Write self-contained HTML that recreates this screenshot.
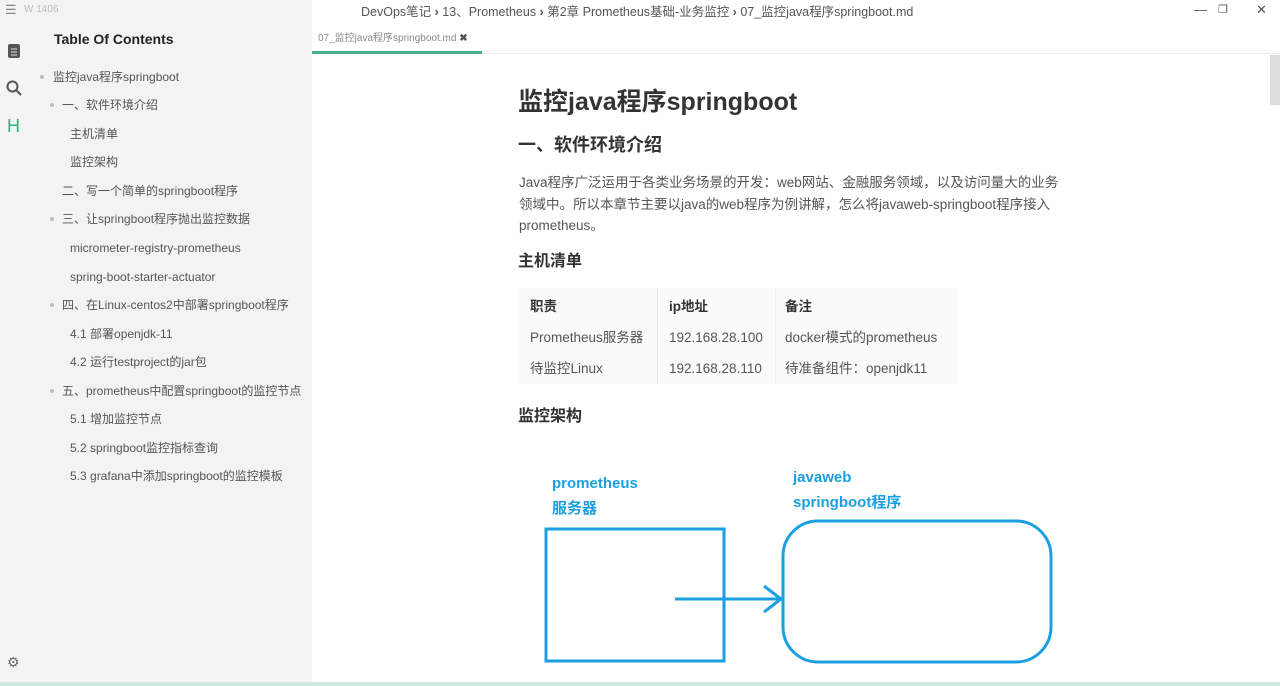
<!DOCTYPE html>
<html><head><meta charset="utf-8"><style>
*{margin:0;padding:0;box-sizing:border-box}
body{width:1280px;height:686px;overflow:hidden;background:#fff;font-family:"Liberation Sans","Noto Sans CJK SC",sans-serif;position:relative;color:#333}
.side{position:absolute;left:0;top:0;width:312px;height:686px;background:#f3f3f3}
.t{position:absolute;white-space:nowrap;font-size:12px;color:#555;line-height:16px}
.b{position:absolute;width:4px;height:4px;border-radius:2px;background:#bbb}
.c{position:absolute;white-space:nowrap;line-height:1.2}
.bot{position:absolute;left:0;top:682px;width:1280px;height:4px;background:#cfe8df}
</style></head><body>
<div class="side">
<div class="t" style="left:5px;top:2px;font-size:13px;color:#888">☰</div>
<div class="t" style="left:24px;top:2px;font-size:10px;color:#bbb">W 1406</div>
<div class="t" style="left:54px;top:31px;font-size:14px;color:#222;font-weight:bold">Table Of Contents</div>
<svg style="position:absolute;left:7px;top:43px" width="14" height="16"><rect x="1" y="1" width="12" height="14" rx="2" fill="#555"/><path d="M4 6h6M4 9h6M4 12h6" stroke="#ddd"/></svg>
<svg style="position:absolute;left:6px;top:80px" width="16" height="16"><circle cx="6.5" cy="6.5" r="5" stroke="#555" stroke-width="2" fill="none"/><path d="M10 10l5 5" stroke="#555" stroke-width="2"/></svg>
<div class="t" style="left:7px;top:116px;font-size:18px;line-height:20px;color:#2db37a">H</div>
<div class="t" style="left:7px;top:654px;font-size:14px;color:#666">⚙</div>
<div class="b" style="left:40px;top:75px"></div><div class="t" style="left:53px;top:69px">监控java程序springboot</div>
<div class="b" style="left:50px;top:103px"></div><div class="t" style="left:62px;top:97px">一、软件环境介绍</div>
<div class="t" style="left:70px;top:126px">主机清单</div>
<div class="t" style="left:70px;top:154px">监控架构</div>
<div class="t" style="left:62px;top:183px">二、写一个简单的springboot程序</div>
<div class="b" style="left:50px;top:217px"></div><div class="t" style="left:62px;top:211px">三、让springboot程序抛出监控数据</div>
<div class="t" style="left:70px;top:240px">micrometer-registry-prometheus</div>
<div class="t" style="left:70px;top:269px">spring-boot-starter-actuator</div>
<div class="b" style="left:50px;top:303px"></div><div class="t" style="left:62px;top:297px">四、在Linux-centos2中部署springboot程序</div>
<div class="t" style="left:70px;top:326px">4.1 部署openjdk-11</div>
<div class="t" style="left:70px;top:354px">4.2 运行testproject的jar包</div>
<div class="b" style="left:50px;top:389px"></div><div class="t" style="left:62px;top:383px">五、prometheus中配置springboot的监控节点</div>
<div class="t" style="left:70px;top:411px">5.1 增加监控节点</div>
<div class="t" style="left:70px;top:440px">5.2 springboot监控指标查询</div>
<div class="t" style="left:70px;top:468px">5.3 grafana中添加springboot的监控模板</div>
</div>
<div class="c" style="left:361px;top:5px;font-size:12.5px;color:#555">DevOps笔记 <b>›</b> 13、Prometheus <b>›</b> 第2章 Prometheus基础-业务监控 <b>›</b> 07_监控java程序springboot.md</div>
<div class="c" style="left:1194px;top:2px;font-size:13px;color:#555">—</div>
<div class="c" style="left:1218px;top:4px;font-size:11px;color:#555">❐</div>
<div class="c" style="left:1256px;top:2px;font-size:13px;color:#555">✕</div>
<div class="c" style="left:318px;top:33px;font-size:10px;color:#888">07_监控java程序springboot.md <b style="color:#555">✖</b></div>
<div style="position:absolute;left:312px;top:51px;width:170px;height:3px;background:#48b38a"></div>
<div style="position:absolute;left:482px;top:53px;width:798px;height:1px;background:#eee"></div>
<div style="position:absolute;left:1270px;top:55px;width:10px;height:50px;background:#ddd"></div>
<div class="c" style="left:518px;top:87px;font-size:25px;font-weight:bold;color:#333">监控java程序springboot</div>
<div class="c" style="left:518px;top:135px;font-size:18px;font-weight:bold;color:#333">一、软件环境介绍</div>
<div class="c" style="left:519px;top:172px;font-size:13.5px;color:#555;line-height:21.5px">Java程序广泛运用于各类业务场景的开发：web网站、金融服务领域，以及访问量大的业务<br>领域中。所以本章节主要以java的web程序为例讲解，怎么将javaweb-springboot程序接入<br>prometheus。</div>
<div class="c" style="left:518px;top:252px;font-size:16px;font-weight:bold;color:#333">主机清单</div>
<div style="position:absolute;left:518px;top:288px;width:440px;height:96px;background:#fafafa"></div>
<div style="position:absolute;left:657px;top:288px;width:1px;height:96px;background:#e6e6e6"></div>
<div style="position:absolute;left:775px;top:288px;width:1px;height:96px;background:#f0f0f0"></div>
<div class="c" style="left:530px;top:298px;font-size:13.5px;line-height:18px;font-weight:bold">职责</div>
<div class="c" style="left:669px;top:298px;font-size:13.5px;line-height:18px;font-weight:bold">ip地址</div>
<div class="c" style="left:785px;top:298px;font-size:13.5px;line-height:18px;font-weight:bold">备注</div>
<div class="c" style="left:530px;top:329px;font-size:13.5px;line-height:18px;color:#555">Prometheus服务器</div>
<div class="c" style="left:669px;top:329px;font-size:13.5px;line-height:18px;color:#555">192.168.28.100</div>
<div class="c" style="left:785px;top:329px;font-size:13.5px;line-height:18px;color:#555">docker模式的prometheus</div>
<div class="c" style="left:530px;top:360px;font-size:13.5px;line-height:18px;color:#555">待监控Linux</div>
<div class="c" style="left:669px;top:360px;font-size:13.5px;line-height:18px;color:#555">192.168.28.110</div>
<div class="c" style="left:785px;top:360px;font-size:13.5px;line-height:18px;color:#555">待准备组件：openjdk11</div>
<div class="c" style="left:518px;top:407px;font-size:16px;font-weight:bold;color:#333">监控架构</div>
<div class="c" style="left:552px;top:471px;font-size:15px;font-weight:bold;color:#1a9fe0;line-height:25px">prometheus<br>服务器</div>
<div class="c" style="left:793px;top:465px;font-size:15px;font-weight:bold;color:#1a9fe0;line-height:25px">javaweb<br>springboot程序</div>
<svg style="position:absolute;left:0;top:0" width="1280" height="686"><g stroke="#1a9fe0" stroke-width="3" fill="none"><rect x="546" y="529" width="178" height="132"/><rect x="783" y="521" width="268" height="141" rx="35"/><path d="M675 599H780M764 586l17 13-17 13"/></g></svg>
<div class="bot"></div>
</body></html>
